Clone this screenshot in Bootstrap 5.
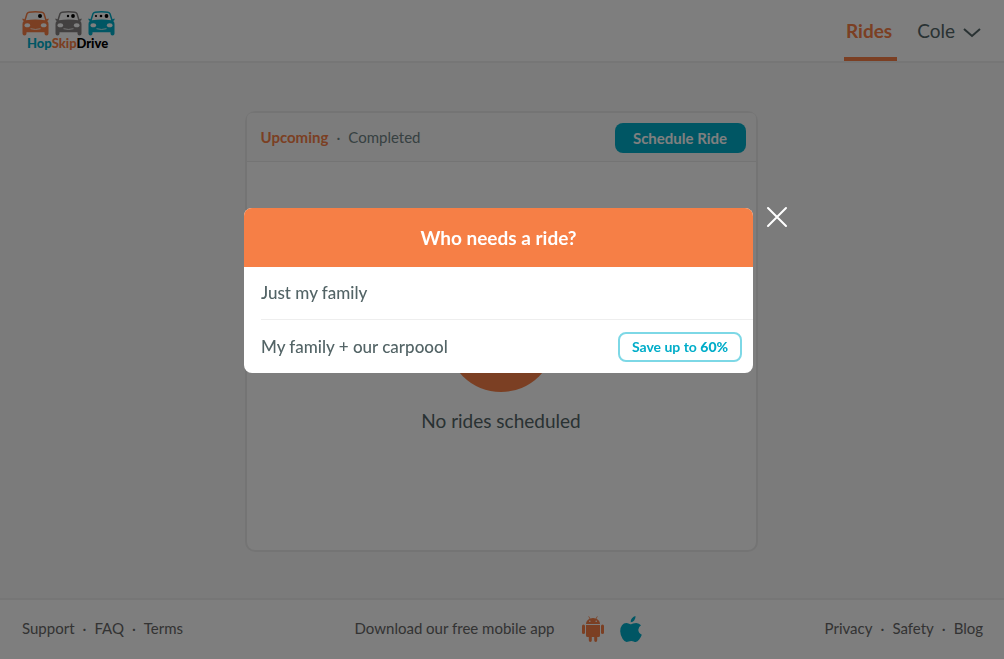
<!DOCTYPE html>
<html lang="en">
<head>
<meta charset="utf-8">
<meta name="viewport" content="width=device-width, initial-scale=1">
<title>HopSkipDrive – Rides</title>
<link href="https://cdn.jsdelivr.net/npm/bootstrap@5.3.0/dist/css/bootstrap.min.css" rel="stylesheet">
<style>
  :root { --orange: #f67f46; --teal: #00adc9; --slate: #536466; }
  body { font-family: Lato, "Open Sans", sans-serif; font-size: 15px; line-height: 20px; background: #f7f7f7; color: var(--slate); }
  a { color: inherit; text-decoration: none; }
  .site-header { background: #fcfcfc; border-bottom: 2px solid #ededed; height: 63px; padding: 0 22px; }
  .brand { padding-top: 11px; line-height: 12px; font-size: 13px; font-weight: 900; }
  .brand-name { color: #000; padding-left: 5px; }
  .t-orange { color: var(--orange); }
  .t-teal { color: var(--teal); }
  .main-link { font-size: 19px; line-height: 24px; padding-top: 19px; height: 61px; }
  .main-link.current { color: var(--orange); font-weight: 700; border-bottom: 4px solid var(--orange); padding-left: 2px; padding-right: 5px; }
  .rides-area { padding: 48px 18px 46px 16px; }
  .ride-card { width: 100%; max-width: 513px; border: 2px solid #e9e9e9; border-radius: 10px; background: #fcfcfc; }
  .ride-card .card-header { background: #f8f8f8; border-bottom: 1px solid #e9e9e9; padding: 10px 10px 8px 14px; }
  .ride-tabs { color: #6e8284; padding-bottom: 3px; }
  .btn-ride { background: var(--teal); color: #fff; font-weight: 700; font-size: 15px; line-height: 20px; padding: 5px 16px; border-radius: 8px; min-width: 131px; border: 0; }
  .ride-circle { width: 108px; height: 108px; background: var(--orange); }
  .empty-text { font-size: 19px; line-height: 24px; margin-top: 17px; }
  .ride-card .card-body { padding-top: 20px; }
  .site-footer { background: #fcfcfc; border-top: 2px solid #ededed; height: 61px; padding: 0 21px 4px 22px; }
  .foot-links { color: #666; }
  .foot-mid { padding-right: 8px; }
  .foot-apps { padding-top: 3px; }
  .modal-backdrop { --bs-backdrop-opacity: .5; }
  .modal { padding-right: 7px; }
  .ride-dialog { max-width: 509px; margin: 208px auto 0; }
  .ride-dialog .modal-content { border: 0; border-radius: 8px; }
  .ride-dialog .modal-header { background: var(--orange); color: #fff; border: 0; border-radius: 8px 8px 0 0; height: 59px; }
  .ride-dialog h1 { font-size: 19px; line-height: 24px; font-weight: 700; }
  .choice { border: 0; background: none; width: 100%; text-align: left; color: var(--slate); font-size: 17px; line-height: 24px; font-weight: 500; padding: 0; height: 52px; }
  .choices { padding-left: 17px; }
  .choice + .choice { border-top: 1px solid #eee; padding-right: 11px; height: 54px; }
  .save-tag { border: 2px solid #7dd8e6; border-radius: 8px; color: var(--teal); font-size: 14px; line-height: 18px; font-weight: 700; padding: 4px 0; width: 124px; text-align: center; }
  .close-x { position: absolute; right: -36px; top: -3px; border: 0; background: none; padding: 0; width: 24px; height: 24px; line-height: 0; }
</style>
</head>
<body class="min-vh-100 d-flex flex-column">
<svg width="0" height="0" class="position-absolute" aria-hidden="true">
  <symbol id="car" viewBox="0 0 27 25">
    <path fill="currentColor" fill-rule="evenodd" d="M7 0.5Q13.500-0.500 20 .5Q22 .8 22.700 2.500L24.500 8.200L26.500 7.600Q27 9.500 25.200 10Q26.500 11.200 26.500 13V22.500Q26.500 24.500 24.500 24.500T22.500 22.500V21.300H4.500V22.500Q4.500 24.500 2.500 24.500T.5 22.500V13Q.5 11.200 1.800 10Q0 9.500.5 7.600L2.500 8.200L4.300 2.500Q5 .8 7 .5ZM7 2Q6 2.200 5.600 3.300L3.800 9.300Q13.500 7.800 23.200 9.300L21.400 3.300Q21 2.200 20 2Q13.500 1.200 7 2Z"/>
    <ellipse cx="5.300" cy="14.300" rx="2.800" ry="2" fill="#fff"/>
    <ellipse cx="21.700" cy="14.300" rx="2.800" ry="2" fill="#fff"/>
    <path d="M8.500 17.700Q13.500 19.200 18.500 17.700" fill="none" stroke="#fff" stroke-width=".8"/>
  </symbol>
</svg>

<header class="site-header d-flex justify-content-between">
  <a href="#" class="brand" aria-label="HopSkipDrive home">
    <svg class="d-block" width="93" height="26" viewBox="0 0 93 26" aria-hidden="true">
      <use href="#car" width="27" height="25" color="#f67f46"/>
      <use href="#car" x="33" width="27" height="25" color="#848080"/>
      <use href="#car" x="66" width="27" height="25" color="#00adc9"/>
      <g fill="#000"><circle cx="18" cy="5" r="2"/><circle cx="46" cy="5" r="1.200"/><circle cx="51" cy="5" r="1.900"/><circle cx="74" cy="5" r="1.100"/><circle cx="79" cy="5" r="1.300"/><circle cx="84.500" cy="5" r="1.900"/></g>
    </svg>
    <span class="brand-name d-block"><span class="t-teal">Hop</span><span class="t-orange">Skip</span>Drive</span>
  </a>
  <nav class="d-flex" aria-label="Main">
    <a href="#" class="main-link current" aria-current="page">Rides</a>
    <a href="#" class="main-link ms-3 ps-1 d-flex gap-2">Cole
      <svg class="mt-1" width="19" height="18" viewBox="0 0 19 18" fill="none" stroke="currentColor" stroke-width="2" aria-hidden="true"><path d="M1 6l8 7 8-7"/></svg>
    </a>
  </nav>
</header>

<main class="rides-area flex-grow-1 d-flex justify-content-center">
  <section class="card ride-card">
    <div class="card-header d-flex justify-content-between align-items-center">
      <nav class="ride-tabs d-flex gap-2" aria-label="Ride lists"><a href="#" class="t-orange fw-bold">Upcoming</a><span>·</span><a href="#">Completed</a></nav>
      <button type="button" class="btn-ride">Schedule Ride</button>
    </div>
    <div class="card-body d-flex flex-column align-items-center justify-content-center">
      <div class="ride-circle rounded-circle"></div>
      <p class="empty-text mb-0">No rides scheduled</p>
    </div>
  </section>
</main>

<footer class="site-footer row gx-0 align-items-center">
  <nav class="col foot-links d-flex gap-2" aria-label="Help"><a href="#">Support</a><span>·</span><a href="#">FAQ</a><span>·</span><a href="#">Terms</a></nav>
  <div class="col-auto foot-links foot-mid d-flex align-items-center">
    <span>Download our free mobile app</span>
    <a href="#" class="foot-apps ms-4 t-orange" aria-label="Android app"><svg class="d-block ms-1" width="22" height="26" viewBox="0 0 22 26" fill="currentColor" aria-hidden="true"><path fill-rule="evenodd" d="M4 8Q4 4.500 7.600 2.700L6.300.6L6.900.2L8.300 2.400Q11 1.500 13.700 2.400L15.100.2L15.700.6L14.400 2.700Q18 4.500 18 8ZM7.800 4.500a.8.8 0 100 1.600.8.800 0 000-1.600ZM14.200 4.500a.8.8 0 100 1.600.8.800 0 000-1.600Z"/><path d="M4 9H18V19.500Q18 21 16.500 21H15.200V24.300Q15.200 26 13.700 26T12.200 24.300V21H9.800V24.300Q9.800 26 8.300 26T6.800 24.300V21H5.500Q4 21 4 19.500Z"/><rect y="8.500" width="3" height="9.500" rx="1.500"/><rect x="19" y="8.500" width="3" height="9.500" rx="1.500"/></svg></a>
    <a href="#" class="foot-apps ms-3 t-teal" aria-label="iPhone app"><svg class="d-block" width="22" height="26" viewBox="0 0 22 26" fill="currentColor" aria-hidden="true"><path d="M15.500 0Q15.800 2.500 14.200 4.400Q12.700 6.300 10.700 6.200Q10.500 3.900 12 2.200Q13.500.4 15.500 0Z"/><path d="M21 9.200Q18.200 11 18.300 13.800Q18.400 17.300 21.800 18.700Q20.900 21.300 19.200 23.600Q17.600 26 15.700 26Q14.800 26 13.600 25.400T11.200 24.900T8.800 25.400T6.600 26Q4.700 26 2.700 23Q.3 19.500.2 15.300Q.1 11.500 2 9.200Q3.700 7.100 6.300 7.100Q7.600 7.100 9.100 7.700T11.100 8.300Q11.500 8.300 13.100 7.600T16.200 6.900Q19.300 7 21 9.200Z"/></svg></a>
  </div>
  <nav class="col foot-links d-flex gap-2 justify-content-end" aria-label="About"><a href="#">Privacy</a><span>·</span><a href="#">Safety</a><span>·</span><a href="#">Blog</a></nav>
</footer>

<div class="modal-backdrop show"></div>
<div class="modal d-block" role="dialog" aria-modal="true" aria-labelledby="rideTitle">
  <div class="modal-dialog ride-dialog">
    <div class="modal-content">
      <div class="modal-header justify-content-center"><h1 class="mb-0" id="rideTitle">Who needs a ride?</h1></div>
      <div class="choices">
        <button type="button" class="choice">Just my family</button>
        <button type="button" class="choice d-flex align-items-center justify-content-between"><span>My family + our carpoool</span><span class="save-tag">Save up to <b class="fw-bolder">60%</b></span></button>
      </div>
      <button type="button" class="close-x" aria-label="Close"><svg width="24" height="24" viewBox="0 0 24 24" stroke="#fff" stroke-width="2" stroke-linecap="round" aria-hidden="true"><path d="M3 3l18 18M21 3L3 21"/></svg></button>
    </div>
  </div>
</div>
<script src="https://cdn.jsdelivr.net/npm/bootstrap@5.3.0/dist/js/bootstrap.bundle.min.js"></script>
</body>
</html>
